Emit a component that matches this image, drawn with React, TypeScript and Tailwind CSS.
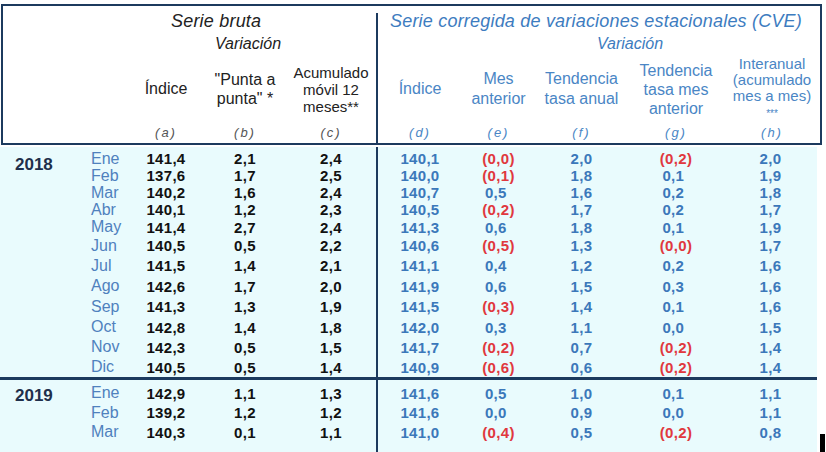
const NAVY = 'bg-[#1c3a5e]';

type Row = { m: string; h: number; a: string; b: string; c: string; d: string; e: string; f: string; g: string; i: string };

const rows2018: Row[] = [
  { m: 'Ene', h: 17, a: '141,4', b: '2,1', c: '2,4', d: '140,1', e: '(0,0)', f: '2,0', g: '(0,2)', i: '2,0' },
  { m: 'Feb', h: 17, a: '137,6', b: '1,7', c: '2,5', d: '140,0', e: '(0,1)', f: '1,8', g: '0,1', i: '1,9' },
  { m: 'Mar', h: 17, a: '140,2', b: '1,6', c: '2,4', d: '140,7', e: '0,5', f: '1,6', g: '0,2', i: '1,8' },
  { m: 'Abr', h: 17, a: '140,1', b: '1,2', c: '2,3', d: '140,5', e: '(0,2)', f: '1,7', g: '0,2', i: '1,7' },
  { m: 'May', h: 18, a: '141,4', b: '2,7', c: '2,4', d: '141,3', e: '0,6', f: '1,8', g: '0,1', i: '1,9' },
  { m: 'Jun', h: 19, a: '140,5', b: '0,5', c: '2,2', d: '140,6', e: '(0,5)', f: '1,3', g: '(0,0)', i: '1,7' },
  { m: 'Jul', h: 21, a: '141,5', b: '1,4', c: '2,1', d: '141,1', e: '0,4', f: '1,2', g: '0,2', i: '1,6' },
  { m: 'Ago', h: 20, a: '142,6', b: '1,7', c: '2,0', d: '141,9', e: '0,6', f: '1,5', g: '0,3', i: '1,6' },
  { m: 'Sep', h: 21, a: '141,3', b: '1,3', c: '1,9', d: '141,5', e: '(0,3)', f: '1,4', g: '0,1', i: '1,6' },
  { m: 'Oct', h: 20, a: '142,8', b: '1,4', c: '1,8', d: '142,0', e: '0,3', f: '1,1', g: '0,0', i: '1,5' },
  { m: 'Nov', h: 20, a: '142,3', b: '0,5', c: '1,5', d: '141,7', e: '(0,2)', f: '0,7', g: '(0,2)', i: '1,4' },
  { m: 'Dic', h: 20, a: '140,5', b: '0,5', c: '1,4', d: '140,9', e: '(0,6)', f: '0,6', g: '(0,2)', i: '1,4' },
];

const rows2019: Row[] = [
  { m: 'Ene', h: 20, a: '142,9', b: '1,1', c: '1,3', d: '141,6', e: '0,5', f: '1,0', g: '0,1', i: '1,1' },
  { m: 'Feb', h: 19, a: '139,2', b: '1,2', c: '1,2', d: '141,6', e: '0,0', f: '0,9', g: '0,0', i: '1,1' },
  { m: 'Mar', h: 20, a: '140,3', b: '0,1', c: '1,1', d: '141,0', e: '(0,4)', f: '0,5', g: '(0,2)', i: '0,8' },
];

const heights: Record<number, string> = {
  17: 'h-[17px]',
  18: 'h-[18px]',
  19: 'h-[19px]',
  20: 'h-[20px]',
  21: 'h-[21px]',
};

// negatives in red with parentheses, positives keep room for the closing one
function Signed({ v }: { v: string }) {
  if (v.startsWith('(')) return <span className="text-[#e0383e]">{v}</span>;
  return (
    <span>
      {v}
      <span className="invisible">)</span>
    </span>
  );
}

function Block({ year, rows, yearPad, last }: { year: string; rows: Row[]; yearPad: string; last?: boolean }) {
  return (
    <div className={`flex ${last ? 'flex-1' : ''}`}>
      <div className="flex w-[376px]">
        <div className={`w-[80px] pl-[15px] text-[17px] font-bold text-[#1f2f4b] ${yearPad}`}>{year}</div>
        <div className="flex flex-col pt-[3px]">
          {rows.map((r) => (
            <div key={r.m} className={`flex items-center ${heights[r.h]}`}>
              <div className="w-[55px] pl-[11px] text-[16px] text-[#4f81bd]">{r.m}</div>
              <div className="w-[62px] text-center text-[15px] font-bold tracking-[0.3px] text-[#111]">{r.a}</div>
              <div className="w-[96px] text-center text-[15px] font-bold tracking-[0.3px] text-[#111]">{r.b}</div>
              <div className="w-[76px] text-center text-[15px] font-bold tracking-[0.3px] text-[#111]">{r.c}</div>
            </div>
          ))}
        </div>
      </div>
      <div className={`w-[2px] ${NAVY}`} />
      <div className="flex flex-col pt-[3px] text-[15px] font-bold tracking-[0.3px] text-[#3b78ba]">
        {rows.map((r) => (
          <div key={r.m} className={`flex items-center ${heights[r.h]}`}>
            <div className="w-[84px] text-center">{r.d}</div>
            <div className="w-[73px] text-center"><Signed v={r.e} /></div>
            <div className="w-[93px] text-center">{r.f}</div>
            <div className="w-[96px] text-center"><Signed v={r.g} /></div>
            <div className="w-[93px] text-center">{r.i}</div>
          </div>
        ))}
      </div>
    </div>
  );
}

export default function App() {
  return (
    <div className="flex h-[452px] w-[826px] flex-col overflow-hidden bg-white font-['Liberation_Sans',Arial,sans-serif] leading-none">
      {/* header */}
      <div className="ml-[1px] mt-[4px] flex h-[141px] w-[821px] shrink-0 border-2 border-[#1c3a5e] bg-white">
        <div className="flex w-[373px] flex-col text-[#222]">
          <div className="flex h-[30px] items-center pl-[168px] text-[18px] italic tracking-[0.2px]">Serie bruta</div>
          <div className="flex h-[16px] items-center pl-[212px] text-[16px] italic">Variación</div>
          <div className="flex h-[74px] items-center">
            <div className="w-[132px]" />
            <div className="w-[62px] text-center text-[16px]">Índice</div>
            <div className="w-[96px] text-center text-[16px] leading-[19px]">"Punta a<br />punta" *</div>
            <div className="w-[76px] text-center text-[15px] leading-[17px]">Acumulado<br />móvil 12<br />meses**</div>
          </div>
          <div className="flex h-[12px] items-center text-[13px] italic tracking-[2px] text-[#555]">
            <div className="w-[132px]" />
            <div className="w-[62px] text-center">(a)</div>
            <div className="w-[96px] text-center">(b)</div>
            <div className="w-[76px] text-center">(c)</div>
          </div>
        </div>
        <div className={`mt-[7px] w-[2px] ${NAVY}`} />
        <div className="flex w-[442px] flex-col text-[#3d7cc0]">
          <div className="flex h-[30px] items-center pl-[12px] text-[18px] italic tracking-[0.2px]">
            Serie corregida de variaciones estacionales (CVE)
          </div>
          <div className="flex h-[16px] items-center pl-[219px] text-[16px] italic">Variación</div>
          <div className="flex h-[74px] items-center text-[16px] text-[#4a86c5]">
            <div className="w-[84px] text-center">Índice</div>
            <div className="w-[73px] text-center leading-[20px]">Mes<br />anterior</div>
            <div className="w-[93px] text-center leading-[20px]">Tendencia<br />tasa anual</div>
            <div className="w-[96px] text-center leading-[19px]">Tendencia<br />tasa mes<br />anterior</div>
            <div className="w-[96px] text-center text-[15px] leading-[16px]">
              Interanual<br />(acumulado<br />mes a mes)<br /><span className="text-[10px]">***</span>
            </div>
          </div>
          <div className="flex h-[12px] items-center text-[13px] italic tracking-[2px] text-[#4a86c5]">
            <div className="w-[84px] text-center">(d)</div>
            <div className="w-[73px] text-center">(e)</div>
            <div className="w-[93px] text-center">(f)</div>
            <div className="w-[96px] text-center">(g)</div>
            <div className="w-[96px] text-center">(h)</div>
          </div>
        </div>
      </div>

      {/* body */}
      <div className="mt-[2px] flex flex-1">
        <div className="flex w-[817px] flex-col bg-[#e9fbfd]">
          <Block year="2018" rows={rows2018} yearPad="pt-[9px]" />
          <div className={`h-[3px] w-full ${NAVY}`} />
          <Block year="2019" rows={rows2019} yearPad="pt-[7px]" last />
        </div>
        <div className="flex flex-1 items-end pl-[3px]">
          <div className="h-[18px] w-[5px] bg-black" />
        </div>
      </div>
    </div>
  );
}
